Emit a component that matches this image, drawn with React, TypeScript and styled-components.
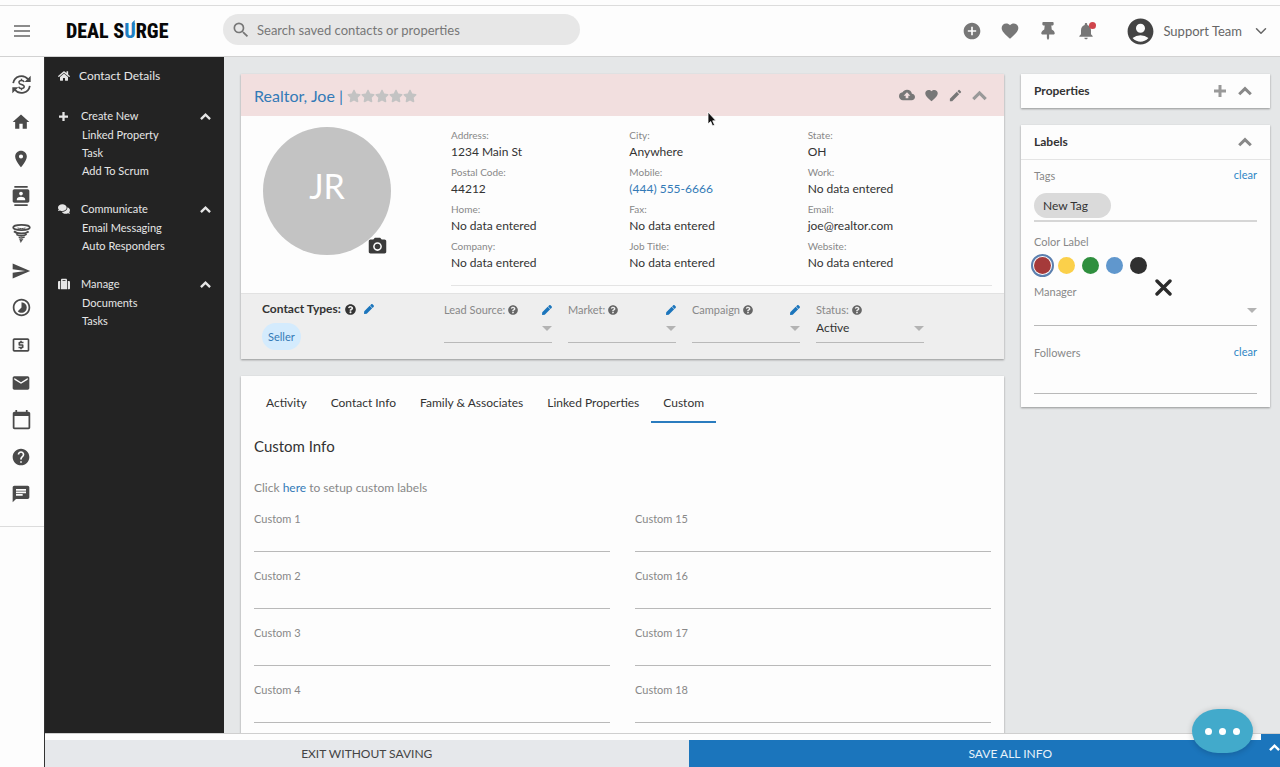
import React from 'react';
import styled, { createGlobalStyle } from 'styled-components';
import {
  MdAccountCircle,
  MdAddCircle,
  MdBackup,
  MdCalendarToday,
  MdChat,
  MdContacts,
  MdEdit,
  MdEmail,
  MdFavorite,
  MdHelp,
  MdHome,
  MdLocalAtm,
  MdNotifications,
  MdPhotoCamera,
  MdPlace,
  MdSearch,
  MdSend,
  MdTimelapse,
} from 'react-icons/md';
import {
  FaComments,
  FaHome,
  FaPen,
  FaQuestionCircle,
  FaStar,
  FaSuitcase,
  FaThumbtack,
} from 'react-icons/fa';
import { ChevronDown } from 'lucide-react';

const GlobalStyle = createGlobalStyle`
  *, *::before, *::after { box-sizing: border-box; }
  body {
    margin: 0;
    background: #fdfdfd;
    color: #333;
    font-family: Lato, "Liberation Sans", sans-serif;
    font-size: 12px;
    line-height: 18px;
  }
  button, input, select { font: inherit; color: inherit; }
  button { border: 0; padding: 0; background: none; cursor: pointer; }
  a { color: #337ab7; text-decoration: none; }
  h1, h2, h3, p, ul, dl, dd { margin: 0; padding: 0; }
  ul { list-style: none; }
  svg { display: block; flex: none; }
`;

const Page = styled.div`
  display: flex;
  flex-direction: column;
  height: 100vh;
  overflow: hidden;
  padding-top: 5px;
`;

const Header = styled.header`
  display: flex;
  align-items: center;
  flex: none;
  height: 52px;
  padding: 0 10px 0 14px;
  border-top: 1px solid #dcdcdc;
  border-bottom: 1px solid #d2d2d2;
  font-size: 13px;
`;

const IconButton = styled.button<{ $color?: string }>`
  display: flex;
  align-items: center;
  justify-content: center;
  color: ${(p) => p.$color ?? '#777'};
`;

const Logo = styled.a`
  width: 157px;
  margin-left: 36px;
  color: #080808;
  font-family: "Roboto Condensed", "Open Sans Condensed", Roboto, sans-serif;
  font-size: 20px;
  font-weight: 800;
  line-height: 26px;
  white-space: nowrap;
`;

const LogoAccent = styled.span`
  position: relative;
  color: #2080c4;
  &::after {
    content: '';
    position: absolute;
    top: 1px;
    right: 1px;
    width: 3px;
    height: 5px;
    background: #2080c4;
    clip-path: polygon(0 60%, 100% 0, 100% 100%, 0 100%);
  }
`;

const SearchBox = styled.label`
  display: flex;
  align-items: center;
  gap: 6px;
  width: 357px;
  height: 31px;
  margin-bottom: 3px;
  padding: 0 8px;
  border-radius: 16px;
  background: #e7e7e7;
  color: #777;
`;

const SearchInput = styled.input`
  flex: 1;
  min-width: 0;
  border: 0;
  outline: 0;
  padding: 0;
  background: none;
  &::placeholder { color: #777; opacity: 1; }
`;

const HeaderActions = styled.nav`
  display: flex;
  align-items: center;
  gap: 16px;
  margin-left: auto;
`;

const HeaderButton = styled(IconButton)`
  position: relative;
  width: 22px;
  height: 22px;
`;

const AlertDot = styled.span`
  position: absolute;
  top: 2px;
  right: 1px;
  width: 7px;
  height: 7px;
  border-radius: 50%;
  background: #d0454c;
`;

const Account = styled.button`
  display: flex;
  align-items: center;
  gap: 7px;
  margin-left: 12px;
  color: #666;
`;

const AccountName = styled.span`
  margin-right: 3px;
`;

const Shell = styled.div`
  display: flex;
  flex: 1;
  min-height: 0;
`;

const Rail = styled.nav`
  flex: none;
  width: 44px;
`;

const RailList = styled.ul`
  padding: 9px 0 13px;
  border-bottom: 1px solid #dcdcdc;
`;

const RailItem = styled.li`
  display: flex;
  align-items: center;
  justify-content: center;
  height: 37px;
  padding-right: 2px;
  &:nth-child(4n) { margin-bottom: 1px; }
`;

const Workspace = styled.div`
  display: flex;
  flex: 1;
  flex-direction: column;
  min-width: 0;
  border-left: 1px solid #333;
`;

const Columns = styled.div`
  display: flex;
  flex: 1;
  min-height: 0;
  overflow: hidden;
`;

const Sidebar = styled.nav`
  flex: none;
  width: 179px;
  padding: 10px 13px 10px 12px;
  background: #232323;
  color: #e6e6e6;
  font-size: 11px;
`;

const SideHome = styled.a`
  display: flex;
  align-items: center;
  gap: 9px;
  height: 18px;
  color: inherit;
  font-size: 12px;
`;

const SideHeading = styled.button`
  display: flex;
  align-items: center;
  gap: 11px;
  width: 100%;
  height: 18px;
  & > svg:last-child { margin-left: auto; }
`;

const SideGroup = styled.section`
  margin-top: 22px;
  & + & { margin-top: 20px; }
`;

const SideLinks = styled.ul`
  padding: 1px 0 0 25px;
  line-height: 18px;
  a { color: inherit; }
`;

const SideIcon = styled.span`
  display: flex;
  justify-content: center;
  width: 13px;
`;

const Main = styled.main`
  display: flex;
  flex: 1;
  gap: 17px;
  min-width: 0;
  padding: 17px 10px 0 17px;
  background: #e5e7e8;
`;

const ContactColumn = styled.div`
  display: flex;
  flex: 1;
  flex-direction: column;
  gap: 17px;
  min-width: 0;
`;

const AsideColumn = styled.aside`
  display: flex;
  flex: none;
  flex-direction: column;
  gap: 17px;
  width: 249px;
`;

const Card = styled.section<{ $grow?: boolean }>`
  position: relative;
  flex: ${(p) => (p.$grow ? '1' : 'none')};
  background: #fdfdfd;
  box-shadow: 0 1px 2px rgba(0, 0, 0, 0.36);
`;

const ContactHeader = styled.header`
  display: flex;
  align-items: center;
  height: 42px;
  padding: 0 17px 0 13px;
  background: #f2dfdf;
`;

const ContactName = styled.h1`
  padding-top: 2px;
  color: #337ab7;
  font-size: 16px;
  font-weight: 400;
  line-height: 20px;
`;

const Stars = styled.div`
  display: flex;
  padding-top: 2px;
  margin-left: 4px;
  color: #c3c3c3;
`;

const CardActions = styled.div<{ $gap: number }>`
  display: flex;
  align-items: center;
  gap: ${(p) => p.$gap}px;
  margin-left: auto;
`;

const ContactBody = styled.div`
  display: flex;
  gap: 60px;
  padding: 11px 12px 7px 22px;
`;

const Avatar = styled.div`
  position: relative;
  display: flex;
  align-items: center;
  justify-content: center;
  flex: none;
  width: 128px;
  height: 128px;
  padding-bottom: 10px;
  border-radius: 50%;
  background: #c3c3c3;
  color: #fff;
  font-size: 34px;
`;

const CameraButton = styled(IconButton)`
  position: absolute;
  right: 3px;
  bottom: -2px;
`;

const Details = styled.dl`
  display: grid;
  grid-template-columns: repeat(3, 1fr);
  flex: 1;
  row-gap: 4px;
  padding: 0 6px 14px 0;
  border-bottom: 1px solid #e4e4e4;
`;

const DetailLabel = styled.dt`
  color: #888;
  font-size: 10px;
  line-height: 16px;
`;

const DetailValue = styled.dd`
  line-height: 17px;
`;

const TypesBar = styled.div`
  display: flex;
  height: 66px;
  padding: 6px 12px 0 21px;
  border-top: 1px solid #e2e2e2;
  background: #eee;
`;

const ContactTypes = styled.div`
  width: 182px;
`;

const TypesTitle = styled.h2`
  display: flex;
  align-items: center;
  gap: 4px;
  font-size: 12px;
  font-weight: 700;
  line-height: 18px;
  button { margin-left: 4px; }
`;

const TypeChip = styled.span`
  display: inline-block;
  margin-top: 5px;
  padding: 0 6px;
  border-radius: 14px;
  background: #d4ebfd;
  color: #337ab7;
  font-size: 11px;
  line-height: 27px;
`;

const SourceFields = styled.div`
  display: flex;
  gap: 16px;
`;

const SourceField = styled.div`
  width: 108px;
`;

const SourceHead = styled.div`
  display: flex;
  align-items: center;
  gap: 3px;
  height: 20px;
  color: #888;
  font-size: 11px;
  button { margin-left: auto; }
`;

const SelectWrap = styled.div<{ $height: number }>`
  position: relative;
  height: ${(p) => p.$height}px;
  border-bottom: 1px solid #b9b9b9;
  &::after {
    content: '';
    position: absolute;
    right: 0;
    top: calc(50% - 5px);
    border: 5px solid transparent;
    border-top-color: #b3b3b3;
    border-bottom: 0;
    pointer-events: none;
  }
`;

const Select = styled.select`
  display: block;
  width: 100%;
  height: 16px;
  border: 0;
  padding: 0;
  outline: 0;
  appearance: none;
  background: none;
  line-height: 16px;
`;

const Tabs = styled.div`
  display: flex;
  height: 47px;
  padding: 0 13px;
`;

const Tab = styled.button<{ $active?: boolean }>`
  padding: 8px 12px 0;
  border-bottom: 2px solid ${(p) => (p.$active ? '#2a7cbf' : 'transparent')};
  white-space: nowrap;
`;

const CustomBody = styled.div`
  padding: 13px 13px 0;
`;

const CustomTitle = styled.h2`
  font-size: 15px;
  font-weight: 400;
  line-height: 20px;
`;

const CustomHint = styled.p`
  margin: 23px 0 13px;
  color: #888;
`;

const CustomGrid = styled.div`
  display: grid;
  grid-template-columns: 1fr 1fr;
  column-gap: 25px;
`;

const CustomField = styled.label`
  display: flex;
  flex-direction: column;
  height: 57px;
  color: #888;
  font-size: 11px;
`;

const LineInput = styled.input<{ $height: number }>`
  display: block;
  width: 100%;
  height: ${(p) => p.$height}px;
  border: 0;
  border-bottom: 1px solid #b9b9b9;
  outline: 0;
  padding: 0;
  background: none;
`;

const PanelHeader = styled.header`
  display: flex;
  align-items: center;
  height: 34px;
  padding: 0 18px 0 13px;
`;

const PanelTitle = styled.h2`
  font-size: 12px;
  font-weight: 700;
`;

const LabelsBody = styled.div`
  padding: 7px 13px 13px;
  border-top: 1px solid #e4e4e4;
`;

const FieldHead = styled.div<{ $spaced?: boolean }>`
  display: flex;
  justify-content: space-between;
  height: 18px;
  margin-top: ${(p) => (p.$spaced ? 18 : 0)}px;
  color: #888;
  font-size: 11px;
`;

const ClearButton = styled.button`
  height: 16px;
  color: #2f86c5;
  line-height: 16px;
`;

const TagBox = styled.div`
  height: 37px;
  margin-bottom: 11px;
  padding-top: 8px;
  border-bottom: 2px solid #d6d6d6;
`;

const Tag = styled.span`
  display: inline-block;
  padding: 0 23px 0 9px;
  border-radius: 13px;
  background: #dadada;
  line-height: 25px;
`;

const Swatches = styled.div`
  display: flex;
  gap: 7px;
  padding: 6px 0 9px;
`;

const Swatch = styled.input<{ $color: string }>`
  width: 17px;
  height: 17px;
  margin: 0;
  border-radius: 50%;
  appearance: none;
  background: ${(p) => p.$color};
  &:checked { outline: 2px solid #5b7fae; outline-offset: 1px; }
`;

const ClearColor = styled(IconButton)`
  position: absolute;
  top: 154px;
  right: 98px;
`;

const Footer = styled.footer`
  position: relative;
  flex: none;
  height: 34px;
  padding-top: 6px;
  border-top: 1px solid #cfcfcf;
  overflow: hidden;
`;

const FooterActions = styled.div`
  display: grid;
  grid-template-columns: 1fr 1fr;
  width: calc(100% + 52px);
`;

const FooterButton = styled.button<{ $primary?: boolean }>`
  height: 27px;
  background: ${(p) => (p.$primary ? '#1b75bc' : '#e6e8eb')};
  color: ${(p) => (p.$primary ? '#e8f2fa' : '#444')};
`;

const ScrollUp = styled(IconButton)`
  position: absolute;
  top: 0;
  right: 0;
  width: 19px;
  height: 34px;
  padding: 0 0 8px 7px;
  background: #1b75bc;
`;

const ChatBubble = styled.button`
  position: fixed;
  right: 27px;
  bottom: 14px;
  display: flex;
  align-items: center;
  justify-content: center;
  gap: 7px;
  width: 61px;
  height: 44px;
  border-radius: 26px / 22px;
  background: #42aacb;
  box-shadow: 0 1px 6px rgba(0, 0, 0, 0.2);
`;

const ChatDot = styled.span`
  width: 7px;
  height: 7px;
  border-radius: 50%;
  background: #fff;
`;

const Pointer = styled.svg`
  position: fixed;
  left: 707px;
  top: 111px;
`;

function MenuIcon() {
  return (
    <svg width="16" height="12" viewBox="0 0 16 12" stroke="currentColor" strokeWidth="1.500">
      <path d="M0 1h16M0 6h16M0 11h16" />
    </svg>
  );
}

function ChevronUpIcon({ size }: { size: number }) {
  return (
    <svg width={size} height={size} viewBox="0 0 14 14" fill="none" stroke="currentColor" strokeWidth="3">
      <path d="M1.200 10.300L7 4.600l5.800 5.700" />
    </svg>
  );
}

function PlusIcon({ size }: { size: number }) {
  return (
    <svg width={size} height={size} viewBox="0 0 12 12" fill="none" stroke="currentColor" strokeWidth="3">
      <path d="M6 0v12M0 6h12" />
    </svg>
  );
}

function ExchangeIcon() {
  return (
    <svg width="21" height="21" viewBox="0 0 24 24" fill="none" stroke="currentColor" strokeWidth="2">
      <path d="M2.500 10.500A9.600 9.600 0 0 1 19.500 6" />
      <path d="M21.500 13.500A9.600 9.600 0 0 1 4.500 18" />
      <path d="M22.500 2v7h-7z M1.500 22v-7h7z" fill="currentColor" stroke="none" />
      <path d="M15 9.200C14.600 7.900 13.500 7.400 12 7.400c-1.700 0-2.900.8-2.900 2.200 0 3.100 6 1.600 6 4.800 0 1.500-1.300 2.300-3.100 2.300-1.700 0-2.900-.7-3.200-2.100M12 5.500v2M12 16.500v2" strokeWidth="1.700" />
    </svg>
  );
}

function FunnelIcon() {
  return (
    <svg width="19" height="19" viewBox="0 0 24 24" fill="none" stroke="currentColor">
      <ellipse cx="12" cy="4.500" rx="10.500" ry="3.300" strokeWidth="2.200" />
      <path d="M7 5c3 1 7 1 10 0" strokeWidth="1.200" />
      <path d="M2.500 9.200c4 3.800 14 3.800 18.500.2" strokeWidth="2.400" />
      <path d="M5.500 13.200c4 2.600 10 2.200 13-.4" strokeWidth="2" />
      <path d="M8.500 16.800c2.500 1.200 5 1 7.500-.4" strokeWidth="1.800" />
      <path d="M9.500 19c1.500.8 3 .6 4.500 0L11 23.500z" fill="currentColor" strokeWidth="0.500" />
    </svg>
  );
}

const railItems: [string, React.ReactNode][] = [
  ['Deals', <ExchangeIcon />],
  ['Home', <MdHome size={20} />],
  ['Places', <MdPlace size={20} />],
  ['Contacts', <MdContacts size={20} />],
  ['Funnel', <FunnelIcon />],
  ['Send', <MdSend size={20} />],
  ['Timeline', <MdTimelapse size={21} />],
  ['Billing', <MdLocalAtm size={20} />],
  ['Mail', <MdEmail size={20} />],
  ['Calendar', <MdCalendarToday size={21} />],
  ['Help', <MdHelp size={20} />],
  ['Chat', <MdChat size={20} />],
];

const sideGroups: { title: string; icon: React.ReactNode; links: string[] }[] = [
  { title: 'Create New', icon: <PlusIcon size={9} />, links: ['Linked Property', 'Task', 'Add To Scrum'] },
  { title: 'Communicate', icon: <FaComments size={12} />, links: ['Email Messaging', 'Auto Responders'] },
  { title: 'Manage', icon: <FaSuitcase size={12} />, links: ['Documents', 'Tasks'] },
];

const details: [string, string, string?][] = [
  ['Address:', '1234 Main St'],
  ['City:', 'Anywhere'],
  ['State:', 'OH'],
  ['Postal Code:', '44212'],
  ['Mobile:', '(444) 555-6666', 'tel:4445556666'],
  ['Work:', 'No data entered'],
  ['Home:', 'No data entered'],
  ['Fax:', 'No data entered'],
  ['Email:', 'joe@realtor.com'],
  ['Company:', 'No data entered'],
  ['Job Title:', 'No data entered'],
  ['Website:', 'No data entered'],
];

const sources = [
  { id: 'lead-source', label: 'Lead Source:', value: '', editable: true },
  { id: 'market', label: 'Market:', value: '', editable: true },
  { id: 'campaign', label: 'Campaign', value: '', editable: true },
  { id: 'status', label: 'Status:', value: 'Active', editable: false },
];

const tabs = ['Activity', 'Contact Info', 'Family & Associates', 'Linked Properties', 'Custom'];
const customRows = [1, 15, 2, 16, 3, 17, 4, 18];
const swatches: [string, string][] = [
  ['Red', '#a53a3a'],
  ['Yellow', '#fbd04a'],
  ['Green', '#2f8f3e'],
  ['Blue', '#6097cd'],
  ['Black', '#303030'],
];

export default function App() {
  return (
    <>
      <GlobalStyle />
      <Page>
        <Header>
          <IconButton aria-label="Menu" $color="#666"><MenuIcon /></IconButton>
          <Logo href="#">DEAL S<LogoAccent>U</LogoAccent>RGE</Logo>
          <SearchBox>
            <MdSearch size={20} />
            <SearchInput aria-label="Search" placeholder="Search saved contacts or properties" />
          </SearchBox>
          <HeaderActions>
            <HeaderButton aria-label="Add"><MdAddCircle size={20} /></HeaderButton>
            <HeaderButton aria-label="Favorites"><MdFavorite size={20} /></HeaderButton>
            <HeaderButton aria-label="Pinned"><FaThumbtack size={18} /></HeaderButton>
            <HeaderButton aria-label="Notifications"><MdNotifications size={20} /><AlertDot /></HeaderButton>
            <Account>
              <MdAccountCircle size={31} color="#444" />
              <AccountName>Support Team</AccountName>
              <ChevronDown size={18} strokeWidth={2} />
            </Account>
          </HeaderActions>
        </Header>

        <Shell>
          <Rail>
            <RailList>
              {railItems.map(([name, icon]) => (
                <RailItem key={name}><IconButton aria-label={name} $color="#4a4a4a">{icon}</IconButton></RailItem>
              ))}
            </RailList>
          </Rail>

          <Workspace>
            <Columns>
              <Sidebar>
                <SideHome href="#"><SideIcon><FaHome size={12} /></SideIcon>Contact Details</SideHome>
                {sideGroups.map((group) => (
                  <SideGroup key={group.title}>
                    <SideHeading><SideIcon>{group.icon}</SideIcon>{group.title}<ChevronUpIcon size={11} /></SideHeading>
                    <SideLinks>
                      {group.links.map((link) => <li key={link}><a href="#">{link}</a></li>)}
                    </SideLinks>
                  </SideGroup>
                ))}
              </Sidebar>

              <Main>
                <ContactColumn>
                  <Card>
                    <ContactHeader>
                      <ContactName>Realtor, Joe |</ContactName>
                      <Stars>{[1, 2, 3, 4, 5].map((n) => <FaStar key={n} size={14} />)}</Stars>
                      <CardActions $gap={9}>
                        <IconButton aria-label="Upload"><MdBackup size={16} /></IconButton>
                        <IconButton aria-label="Favorite"><MdFavorite size={15} /></IconButton>
                        <IconButton aria-label="Edit"><MdEdit size={15} /></IconButton>
                        <IconButton aria-label="Collapse" $color="#999"><ChevronUpIcon size={15} /></IconButton>
                      </CardActions>
                    </ContactHeader>
                    <ContactBody>
                      <Avatar>
                        JR
                        <CameraButton aria-label="Change photo" $color="#3a3a3a"><MdPhotoCamera size={21} /></CameraButton>
                      </Avatar>
                      <Details>
                        {details.map(([label, value, href]) => (
                          <div key={label}>
                            <DetailLabel>{label}</DetailLabel>
                            <DetailValue>{href ? <a href={href}>{value}</a> : value}</DetailValue>
                          </div>
                        ))}
                      </Details>
                    </ContactBody>
                    <TypesBar>
                      <ContactTypes>
                        <TypesTitle>
                          Contact Types: <FaQuestionCircle size={11} />
                          <IconButton aria-label="Edit contact types" $color="#1b75bc"><FaPen size={10} /></IconButton>
                        </TypesTitle>
                        <TypeChip>Seller</TypeChip>
                      </ContactTypes>
                      <SourceFields>
                        {sources.map((field) => (
                          <SourceField key={field.id}>
                            <SourceHead>
                              <label htmlFor={field.id}>{field.label}</label>
                              <FaQuestionCircle size={10} color="#666" />
                              {field.editable && (
                                <IconButton aria-label={`Edit ${field.label}`} $color="#1b75bc"><FaPen size={10} /></IconButton>
                              )}
                            </SourceHead>
                            <SelectWrap $height={23}>
                              <Select id={field.id}><option>{field.value}</option></Select>
                            </SelectWrap>
                          </SourceField>
                        ))}
                      </SourceFields>
                    </TypesBar>
                  </Card>

                  <Card $grow>
                    <Tabs role="tablist">
                      {tabs.map((tab) => (
                        <Tab key={tab} role="tab" $active={tab === 'Custom'} aria-selected={tab === 'Custom'}>{tab}</Tab>
                      ))}
                    </Tabs>
                    <CustomBody>
                      <CustomTitle>Custom Info</CustomTitle>
                      <CustomHint>Click <a href="#">here</a> to setup custom labels</CustomHint>
                      <CustomGrid>
                        {customRows.map((n) => (
                          <CustomField key={n}>Custom {n}<LineInput $height={24} /></CustomField>
                        ))}
                      </CustomGrid>
                    </CustomBody>
                  </Card>
                </ContactColumn>

                <AsideColumn>
                  <Card>
                    <PanelHeader>
                      <PanelTitle>Properties</PanelTitle>
                      <CardActions $gap={12}>
                        <IconButton aria-label="Add property" $color="#999"><PlusIcon size={12} /></IconButton>
                        <IconButton aria-label="Collapse properties" $color="#888"><ChevronUpIcon size={14} /></IconButton>
                      </CardActions>
                    </PanelHeader>
                  </Card>
                  <Card>
                    <PanelHeader>
                      <PanelTitle>Labels</PanelTitle>
                      <CardActions $gap={12}>
                        <IconButton aria-label="Collapse labels" $color="#888"><ChevronUpIcon size={14} /></IconButton>
                      </CardActions>
                    </PanelHeader>
                    <LabelsBody>
                      <FieldHead><span>Tags</span><ClearButton>clear</ClearButton></FieldHead>
                      <TagBox><Tag>New Tag</Tag></TagBox>
                      <FieldHead>Color Label</FieldHead>
                      <Swatches role="radiogroup" aria-label="Color Label">
                        {swatches.map(([name, color]) => (
                          <Swatch key={name} type="radio" name="color" aria-label={name} $color={color} defaultChecked={name === 'Red'} />
                        ))}
                      </Swatches>
                      <FieldHead><label htmlFor="manager">Manager</label></FieldHead>
                      <SelectWrap $height={25}><Select id="manager"><option /></Select></SelectWrap>
                      <FieldHead $spaced><label htmlFor="followers">Followers</label><ClearButton>clear</ClearButton></FieldHead>
                      <LineInput id="followers" $height={32} />
                    </LabelsBody>
                    <ClearColor aria-label="Clear color" $color="#2b2b2b">
                      <svg width="17" height="17" viewBox="0 0 17 17" stroke="currentColor" strokeWidth="3.400" strokeLinecap="round">
                        <path d="M2 2l13 13M15 2L2 15" />
                      </svg>
                    </ClearColor>
                  </Card>
                </AsideColumn>
              </Main>
            </Columns>

            <Footer>
              <FooterActions>
                <FooterButton>EXIT WITHOUT SAVING</FooterButton>
                <FooterButton $primary>SAVE ALL INFO</FooterButton>
              </FooterActions>
              <ScrollUp aria-label="Scroll to top" $color="#fff"><ChevronUpIcon size={11} /></ScrollUp>
            </Footer>
          </Workspace>
        </Shell>
      </Page>
      <ChatBubble aria-label="Open chat"><ChatDot /><ChatDot /><ChatDot /></ChatBubble>
      <Pointer width="10" height="17" viewBox="0 0 10 17" aria-hidden="true">
        <path d="M1 1v12l2.700-2.500L5.600 15l2-.9-1.900-4.300H9z" fill="#111" stroke="#fff" strokeWidth="0.800" />
      </Pointer>
    </>
  );
}
